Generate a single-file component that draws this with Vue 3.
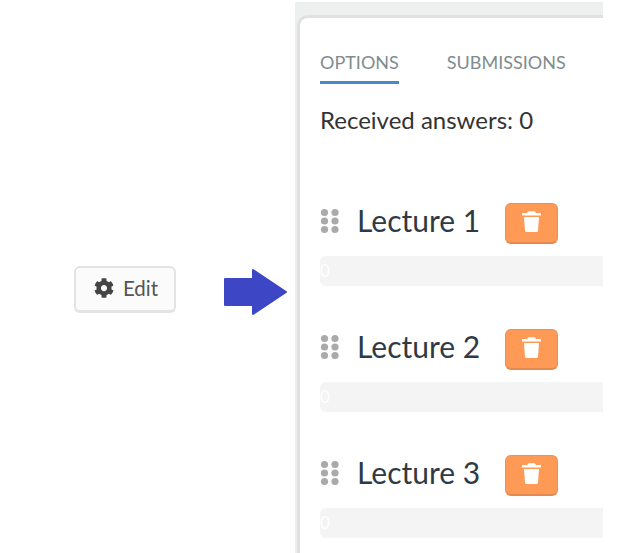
<script setup>
const lectures = ['Lecture 1', 'Lecture 2', 'Lecture 3']
</script>

<template>
  <div class="page">
    <div class="left">
      <button class="edit">
        <svg class="gear" viewBox="0 0 512 512" width="20" height="20"><path fill="#444" d="M487.4 315.7l-42.6-24.6c4.3-23.2 4.3-47 0-70.2l42.6-24.6c4.9-2.8 7.1-8.6 5.5-14-11.100-35.600-30-67.800-54.700-94.600-3.800-4.100-10-5.100-14.800-2.300L380.800 110c-17.900-15.400-38.500-27.300-60.800-35.100V25.800c0-5.600-3.900-10.500-9.400-11.700-36.700-8.200-74.300-7.800-109.200 0-5.500 1.200-9.400 6.100-9.400 11.700V75c-22.200 7.900-42.800 19.800-60.800 35.100L88.700 85.500c-4.900-2.800-11-1.900-14.800 2.300-24.700 26.700-43.600 58.900-54.700 94.600-1.700 5.400.6 11.200 5.500 14L67.300 221c-4.300 23.200-4.300 47 0 70.200l-42.600 24.600c-4.900 2.800-7.100 8.600-5.500 14 11.100 35.600 30 67.800 54.700 94.600 3.800 4.100 10 5.100 14.800 2.300l42.600-24.600c17.900 15.400 38.500 27.300 60.800 35.100v49.200c0 5.600 3.900 10.500 9.400 11.700 36.700 8.200 74.300 7.800 109.200 0 5.500-1.200 9.400-6.100 9.400-11.700v-49.200c22.200-7.900 42.800-19.800 60.800-35.100l42.600 24.600c4.900 2.800 11 1.900 14.800-2.300 24.700-26.700 43.600-58.900 54.700-94.600 1.500-5.500-.7-11.300-5.600-14.100zM256 336c-44.100 0-80-35.900-80-80s35.900-80 80-80 80 35.900 80 80-35.900 80-80 80z"/></svg>
        <span>Edit</span>
      </button>
      <svg class="arrow" viewBox="0 0 63 48" width="63" height="48"><path fill="#3d46c4" stroke="#3d46c4" stroke-width="2" stroke-linejoin="round" d="M1 11H29V2L62 24L29 46V37H1Z"/></svg>
    </div>
    <div class="panel">
      <div class="card">
        <div class="tabs">
          <div class="tab active">OPTIONS</div>
          <div class="tab">SUBMISSIONS</div>
        </div>
        <div class="received">Received answers: 0</div>
        <div class="list">
          <div v-for="name in lectures" :key="name" class="item">
            <div class="head">
              <svg class="grip" viewBox="0 0 20 26" width="20" height="26">
                <g fill="#aaa">
                  <circle cx="4.500" cy="4.500" r="3.600" /><circle cx="15" cy="4.500" r="3.600" />
                  <circle cx="4.500" cy="13" r="3.600" /><circle cx="15" cy="13" r="3.600" />
                  <circle cx="4.500" cy="21.500" r="3.600" /><circle cx="15" cy="21.500" r="3.600" />
                </g>
              </svg>
              <span class="name">{{ name }}</span>
              <button class="del">
                <svg viewBox="0 0 19 21" width="19" height="21"><path fill="#fff" d="M6 .5C6.500 0 12.500 0 13 .5L14 2h4a1 1 0 0 1 0 2.600H1A1 1 0 0 1 1 2h4zM2 6h15l-1 13.500a1.500 1.500 0 0 1-1.500 1.500h-10A1.500 1.500 0 0 1 3 19.500z"/></svg>
              </button>
            </div>
            <div class="bar"><span>0</span></div>
          </div>
        </div>
      </div>
    </div>
  </div>
</template>

<style>
html, body { margin: 0; background: #fff; }
</style>

<style scoped>
.page {
  width: 644px;
  height: 553px;
  display: flex;
  overflow: hidden;
  background: #fff;
  font-family: Lato, "Noto Sans", sans-serif;
}
.left {
  width: 295px;
  box-sizing: border-box;
  padding: 266px 0 0 74px;
  display: flex;
  align-items: flex-start;
  gap: 48px;
  flex: none;
}
.edit {
  width: 102px;
  height: 47px;
  box-sizing: border-box;
  display: flex;
  align-items: center;
  justify-content: center;
  gap: 9px;
  background: #fbfbfb;
  border: 2px solid #e3e3e3;
  border-bottom-width: 3px;
  border-radius: 6px;
  font: 20.500px Lato, sans-serif;
  color: #555;
  padding: 0 0 2px 2px;
}
.arrow { flex: none; margin-top: 2px; }
.panel {
  width: 308px;
  flex: none;
  margin-top: 2px;
  height: 551px;
  box-sizing: border-box;
  padding: 13px 0 0 2px;
  background: #eef0f0;
  overflow: hidden;
}
.card {
  height: 600px;
  background: #fff;
  box-sizing: border-box;
  border-left: 3px solid #dfe1e1;
  border-top: 3px solid #dfe1e1;
  border-top-left-radius: 11px;
  padding: 32px 0 0 20px;
}
.tabs { display: flex; gap: 48px; }
.tab {
  font-size: 18px;
  line-height: 24px;
  color: #7f8c8d;
  padding-bottom: 7px;
  border-bottom: 3px solid transparent;
}
.tab.active { border-bottom-color: #4a89c8; }
.received {
  margin-top: 19px;
  font-size: 24px;
  line-height: 34px;
  color: #333;
}
.list { margin-top: 65px; }
.item { height: 126px; }
.head {
  display: flex;
  align-items: center;
  height: 42px;
}
.grip { flex: none; margin-top: -4px; }
.name {
  margin-left: 17px;
  padding-bottom: 7px;
  font-size: 30px;
  color: #2f3a44;
  width: 148px;
}
.del {
  width: 53px;
  height: 41px;
  box-sizing: border-box;
  background: #ff9a56;
  border: 1px solid #ec9054;
  border-bottom: 2px solid #e58a4e;
  border-radius: 6px;
  display: flex;
  align-items: center;
  justify-content: center;
  padding: 0 0 3px;
}
.bar {
  margin-top: 12px;
  height: 30px;
  background: #f4f4f4;
  border-radius: 6px 0 0 6px;
  font-size: 17px;
  line-height: 30px;
  color: #fff;
}
</style>
